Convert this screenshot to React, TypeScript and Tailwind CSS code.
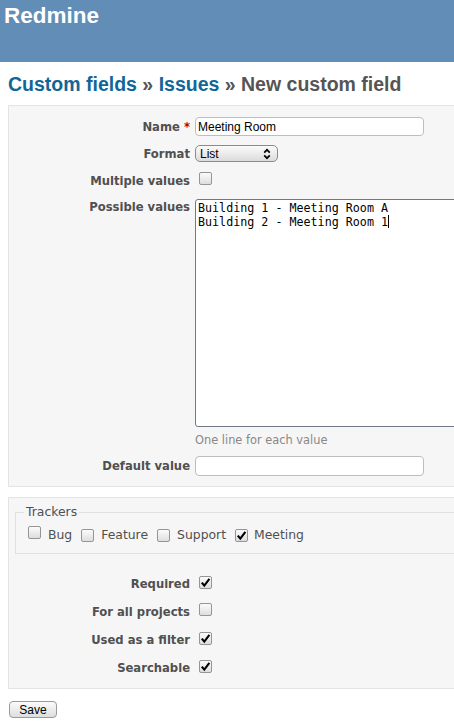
import React from "react";

function Cb({ checked }: { checked?: boolean }) {
  return (
    <span className="inline-flex w-[13px] h-[13px] shrink-0 items-center justify-center rounded-[2px] border border-[#959595] bg-linear-to-b from-[#fbfbfb] to-[#dedede]">
      {checked && (
        <svg width="11" height="11" viewBox="0 0 11 11">
          <path d="M1.8 5.6 L4.3 8.6 L9.4 1.8" fill="none" stroke="#000" strokeWidth="2.1" strokeLinejoin="miter" />
        </svg>
      )}
    </span>
  );
}

function Label({ children }: { children: React.ReactNode }) {
  return (
    <div className="w-[181px] shrink-0 text-right font-bold text-[11.6px] leading-[16px] text-[#505050]">
      {children}
    </div>
  );
}

export default function App() {
  return (
    <div className="w-[454px] h-[728px] overflow-hidden bg-white font-['DejaVu_Sans',sans-serif] text-[12px] text-[#505050]">
      <div className="h-[62px] bg-[#628db6] pl-[4px] pt-[3px]">
        <h1 className="font-['Liberation_Sans',sans-serif] font-bold text-[22.5px] leading-[26px] text-white">
          Redmine
        </h1>
      </div>
      <div className="pl-[8px]">
        <h2 className="mt-[10px] font-['Liberation_Sans',sans-serif] font-bold text-[19.5px] leading-[24px] text-[#555] whitespace-nowrap">
          <span className="text-[#116699]">Custom fields</span> » <span className="text-[#116699]">Issues</span> » New custom field
        </h2>

        <div className="mt-[9px] w-[480px] border border-[#e4e4e4] bg-[#f6f6f6] pt-[7px] pb-[7px]">
          <div className="flex h-[27px] items-center">
            <Label>
              Name <span className="text-[#bb0000]">*</span>
            </Label>
            <div className="ml-[5px] flex h-[19px] w-[229px] items-center rounded-[4px] border border-[#bdbdbd] bg-white pl-[2px] font-['Liberation_Sans',sans-serif] text-[12px] text-black">
              Meeting Room
            </div>
          </div>
          <div className="flex h-[27px] items-center">
            <Label>Format</Label>
            <div className="ml-[5px] flex h-[17px] w-[83px] items-center justify-between rounded-[5px] border border-[#8a8a8a] bg-linear-to-b from-[#fbfbfb] to-[#dcdcdc] pl-[4px] pr-[6px] font-['Liberation_Sans',sans-serif] text-[12px] text-black">
              <span>List</span>
              <svg width="8" height="12" viewBox="0 0 8 12">
                <path d="M1.2 4.6 L4 1.8 L6.8 4.6" fill="none" stroke="#000" strokeWidth="1.7" />
                <path d="M1.2 7.4 L4 10.2 L6.8 7.4" fill="none" stroke="#000" strokeWidth="1.7" />
              </svg>
            </div>
          </div>
          <div className="flex h-[27px] items-center">
            <Label>Multiple values</Label>
            <div className="ml-[9px]">
              <Cb />
            </div>
          </div>
          <div className="flex pt-[5px]">
            <Label>Possible values</Label>
            <div className="ml-[5px] flex flex-col">
              <div className="h-[228px] w-[280px] rounded-[3px] border border-[#6f7a86] bg-white pl-[2px] font-['DejaVu_Sans_Mono',monospace] text-[11.7px] leading-[14px] text-black whitespace-pre">
                <div className="pt-[1px]">Building 1 - Meeting Room A</div>
                <div>
                  Building 2 - Meeting Room 1<span className="inline-block h-[13px] w-[1px] bg-black align-[-2px]" />
                </div>
              </div>
              <div className="mt-[5px] text-[11.4px] leading-[16px] text-[#888]">One line for each value</div>
            </div>
          </div>
          <div className="mt-[4px] flex h-[27px] items-center">
            <Label>Default value</Label>
            <div className="ml-[5px] h-[20px] w-[229px] rounded-[4px] border border-[#bdbdbd] bg-white" />
          </div>
        </div>

        <div className="mt-[10px] w-[480px] border border-[#e4e4e4] bg-[#f6f6f6] pt-[6px] pb-[6px]">
          <fieldset className="ml-[6px] mr-[6px] border border-[#e0e0e0] pl-[8px] pt-[5px] pb-[8px]">
            <legend className="px-[2px] text-[12.4px] leading-[16px] text-[#505050]">Trackers</legend>
            <div className="flex h-[20px] items-center text-[12.4px] text-[#505050]">
              <span className="ml-[4px]"><Cb /></span>
              <span className="ml-[7px] mr-[9px]">Bug</span>
              <Cb />
              <span className="ml-[7px] mr-[9px]">Feature</span>
              <Cb />
              <span className="ml-[7px] mr-[9px]">Support</span>
              <Cb checked />
              <span className="ml-[6px]">Meeting</span>
            </div>
          </fieldset>
          <div className="mt-[16px]">
            {[
              ["Required", true],
              ["For all projects", false],
              ["Used as a filter", true],
              ["Searchable", true],
            ].map(([l, c]) => (
              <div key={l as string} className="flex h-[28px] items-center">
                <Label>{l as string}</Label>
                <div className="ml-[9px]">
                  <Cb checked={c as boolean} />
                </div>
              </div>
            ))}
          </div>
        </div>

        <button className="mt-[12px] ml-[1px] flex h-[17px] w-[48px] items-center justify-center rounded-[4px] border border-[#9a9a9a] bg-linear-to-b from-[#fbfbfb] to-[#dedede] font-['Liberation_Sans',sans-serif] text-[12px] text-black">
          Save
        </button>
      </div>
    </div>
  );
}
